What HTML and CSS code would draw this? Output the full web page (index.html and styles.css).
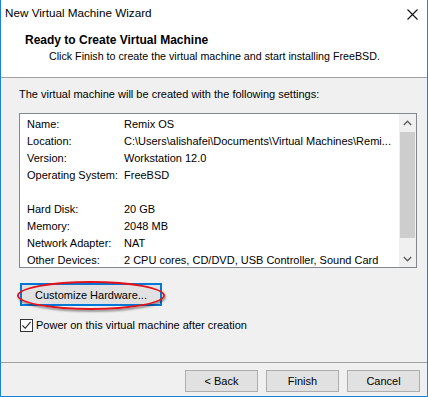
FILE: index.html
```html
<!DOCTYPE html>
<html>
<head>
<meta charset="utf-8">
<link rel="stylesheet" href="styles.css">
</head>
<body>
<div class="window">
  <div class="titlebar">
    <span class="title">New Virtual Machine Wizard</span>
    <svg class="close" width="11" height="11" viewBox="0 0 11 11"><path d="M0.5 0.5 L10.5 10.5 M10.5 0.5 L0.5 10.5" stroke="#111" stroke-width="1.1" fill="none"/></svg>
  </div>
  <div class="header">
    <div class="heading">Ready to Create Virtual Machine</div>
    <div class="subheading">Click Finish to create the virtual machine and start installing FreeBSD.</div>
  </div>
  <div class="content">
    <div class="intro">The virtual machine will be created with the following settings:</div>
    <div class="listbox">
      <div class="rows">
        <div class="row"><span class="label">Name:</span><span class="value">Remix OS</span></div>
        <div class="row"><span class="label">Location:</span><span class="value">C:\Users\alishafei\Documents\Virtual Machines\Remi...</span></div>
        <div class="row"><span class="label">Version:</span><span class="value">Workstation 12.0</span></div>
        <div class="row"><span class="label">Operating System:</span><span class="value">FreeBSD</span></div>
        <div class="row"></div>
        <div class="row"><span class="label">Hard Disk:</span><span class="value">20 GB</span></div>
        <div class="row"><span class="label">Memory:</span><span class="value">2048 MB</span></div>
        <div class="row"><span class="label">Network Adapter:</span><span class="value">NAT</span></div>
        <div class="row"><span class="label">Other Devices:</span><span class="value">2 CPU cores, CD/DVD, USB Controller, Sound Card</span></div>
      </div>
      <div class="scrollbar">
        <div class="sb-btn"><svg width="9" height="6" viewBox="0 0 9 6"><path d="M0.8 5 L4.5 1.3 L8.2 5" stroke="#606060" stroke-width="1.4" fill="none"/></svg></div>
        <div class="sb-track"><div class="sb-thumb"></div></div>
        <div class="sb-btn"><svg width="9" height="6" viewBox="0 0 9 6"><path d="M0.8 1 L4.5 4.7 L8.2 1" stroke="#606060" stroke-width="1.4" fill="none"/></svg></div>
      </div>
    </div>
    <div class="custom-wrap">
      <button class="btn btn-focus">Customize Hardware...</button>
      <div class="annotation"></div>
    </div>
    <label class="check-row">
      <span class="checkbox"><svg width="11" height="11" viewBox="0 0 11 11"><path d="M1.5 5.5 L4.2 8.3 L9.6 1.8" stroke="#222" stroke-width="1.1" fill="none"/></svg></span>
      <span>Power on this virtual machine after creation</span>
    </label>
  </div>
  <div class="footer">
    <button class="btn btn-nav">&lt; Back</button>
    <button class="btn btn-nav">Finish</button>
    <button class="btn btn-nav">Cancel</button>
  </div>
</div>
</body>
</html>
```
FILE: styles.css
```css
html, body {
  margin: 0;
  padding: 0;
  background: #ffffff;
}
body {
  font-family: "Liberation Sans", Arial, sans-serif;
  font-size: 11px;
  color: #000;
}
.window {
  width: 428px;
  height: 397px;
  box-sizing: border-box;
  border-left: 1px solid #1883d7;
  border-right: 1px solid #1883d7;
  border-bottom: 1px solid #1883d7;
  display: flex;
  flex-direction: column;
  background: #f0f0f0;
}
.titlebar {
  height: 28px;
  background: #fff;
  display: flex;
  align-items: flex-start;
  justify-content: space-between;
}
.title {
  line-height: 26px;
  padding-left: 4px;
  font-size: 11.7px;
}
.close {
  margin-top: 9px;
  margin-right: 9px;
}
.header {
  background: #fff;
  padding-top: 4px;
  box-sizing: border-box;
  border-bottom: 1px solid #a0a0a0;
  height: 50px;
}
.heading {
  font-weight: bold;
  line-height: 16px;
  padding-left: 24px;
  font-size: 12px;
}
.subheading {
  line-height: 16px;
  padding-left: 48px;
  font-size: 10.7px;
}
.content {
  flex: 1;
  padding: 8px 10px 0 18px;
  display: flex;
  flex-direction: column;
}
.intro {
  line-height: 16px;
}
.listbox {
  margin-top: 11px;
  height: 155px;
  box-sizing: border-box;
  border: 1px solid #828790;
  background: #fff;
  display: flex;
}
.rows {
  flex: 1;
  min-width: 0;
  padding: 2px 4px 0 7px;
}
.row {
  height: 17px;
  line-height: 17px;
  display: flex;
  white-space: nowrap;
}
.label {
  width: 97px;
  flex: none;
}
.value {
  flex: 1;
  min-width: 0;
}
.scrollbar {
  width: 17px;
  flex: none;
  background: #f0f0f0;
  display: flex;
  flex-direction: column;
}
.sb-btn {
  height: 17px;
  display: flex;
  align-items: center;
  justify-content: center;
}
.sb-track {
  flex: 1;
  padding-top: 1px;
}
.sb-thumb {
  height: 106px;
  margin: 0 1px;
  background: #cdcdcd;
}
.btn {
  font-family: "Liberation Sans", Arial, sans-serif;
  font-size: 11px;
  color: #000;
  background: #e1e1e1;
  border: 1px solid #adadad;
  padding: 0;
  margin: 0;
  box-sizing: border-box;
}
.custom-wrap {
  position: relative;
  margin-top: 15px;
  margin-left: 1px;
  width: 142px;
  height: 23px;
}
.btn-focus {
  width: 142px;
  height: 23px;
  border: 1px solid #0078d7;
  box-shadow: inset 0 0 0 1px #0078d7;
}
.annotation {
  position: absolute;
  left: -3px;
  top: -2px;
  width: 148px;
  height: 29px;
  box-sizing: border-box;
  border: 2.5px solid #e3121b;
  border-radius: 50%;
  box-shadow: 1px 2px 2px rgba(0, 0, 0, 0.35);
}
.check-row {
  margin-top: 11px;
  margin-left: 1px;
  display: flex;
  align-items: center;
  gap: 3px;
  line-height: 16px;
}
.checkbox {
  width: 13px;
  height: 13px;
  box-sizing: border-box;
  border: 1px solid #333;
  background: #fff;
  display: flex;
  align-items: center;
  justify-content: center;
}
.footer {
  height: 34px;
  box-sizing: border-box;
  border-top: 1px solid #a0a0a0;
  padding: 7px 7px 0 0;
  display: flex;
  justify-content: flex-end;
  align-items: flex-start;
  gap: 8px;
}
.btn-nav {
  width: 73px;
  height: 22px;
}
```
